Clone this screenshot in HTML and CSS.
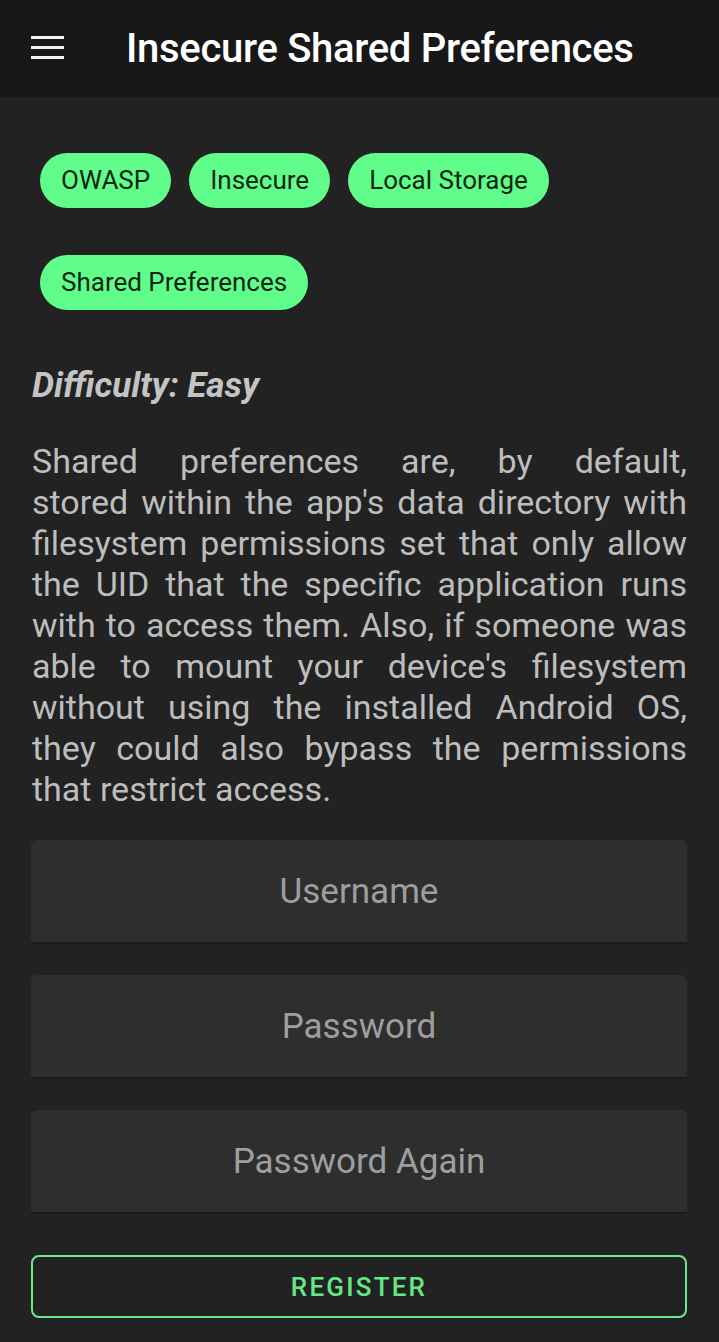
FILE: index.html
```html
<!DOCTYPE html>
<html>
<head>
<meta charset="utf-8">
<link rel="stylesheet" href="styles.css">
</head>
<body>
<header class="appbar">
  <div class="menu"><span></span><span></span><span></span></div>
  <h1 class="title">Insecure Shared Preferences</h1>
</header>
<main class="content">
  <div class="chips">
    <span class="chip">OWASP</span>
    <span class="chip">Insecure</span>
    <span class="chip">Local Storage</span>
    <span class="chip">Shared Preferences</span>
  </div>
  <p class="difficulty">Difficulty: Easy</p>
  <p class="desc"><span class="ln">Shared preferences are, by default,</span> <span class="ln">stored within the app's data directory with</span> <span class="ln">filesystem permissions set that only allow</span> <span class="ln">the UID that the specific application runs</span> <span class="ln">with to access them. Also, if someone was</span> <span class="ln">able to mount your device's filesystem</span> <span class="ln">without using the installed Android OS,</span> <span class="ln">they could also bypass the permissions</span> <span class="ln last">that restrict access.</span></p>
  <div class="form">
    <div class="field">Username</div>
    <div class="field">Password</div>
    <div class="field">Password Again</div>
    <div class="button">REGISTER</div>
  </div>
</main>
</body>
</html>
```
FILE: styles.css
```css
* { box-sizing: border-box; }
html, body { margin: 0; padding: 0; }
body {
  background: #222222;
  font-family: Roboto, "Noto Sans", sans-serif;
  width: 719px;
  height: 1342px;
  overflow: hidden;
}
.appbar {
  height: 97px;
  background: #181818;
  display: flex;
  align-items: center;
  padding-left: 31px;
}
.menu {
  width: 33px;
  display: flex;
  flex-direction: column;
  gap: 7px;
  margin-top: -3px;
}
.menu span {
  display: block;
  height: 3px;
  background: #f2f2f2;
}
.title {
  margin: 0 0 0 62px;
  color: #ffffff;
  font-size: 40px;
  font-weight: 500;
  letter-spacing: -0.3px;
}
.content {
  padding: 56px 32px 0 31px;
}
.chips {
  display: flex;
  flex-wrap: wrap;
  column-gap: 18px;
  row-gap: 47px;
  padding-left: 9px;
}
.chip {
  height: 55px;
  line-height: 55px;
  padding: 0 21px;
  border-radius: 28px;
  background: #61fd8a;
  color: #0c2613;
  font-size: 26px;
}
.difficulty {
  margin: 54px 0 0 1px;
  color: #c4c4c4;
  font-size: 35px;
  font-weight: 700;
  font-style: italic;
  line-height: 44px;
}
.desc {
  margin: 33px 0 0 1px;
  color: #bdbdbd;
  font-size: 34px;
  line-height: 41px;
}
.desc .ln {
  display: block;
  text-align: justify;
  text-align-last: justify;
}
.desc .ln.last {
  text-align-last: left;
}
.form {
  margin-top: 30px;
  display: flex;
  flex-direction: column;
  gap: 31px;
}
.field {
  height: 104px;
  background: #2e2e2e;
  border-radius: 6px 6px 0 0;
  border-bottom: 2px solid #1b1b1b;
  display: flex;
  align-items: center;
  justify-content: center;
  color: #9e9e9e;
  font-size: 35px;
}
.button {
  margin-top: 10px;
  height: 63px;
  border: 2px solid #6be88c;
  border-radius: 8px;
  display: flex;
  align-items: center;
  justify-content: center;
  color: #62e887;
  font-size: 26px;
  font-weight: 500;
  letter-spacing: 2.2px;
}
```
